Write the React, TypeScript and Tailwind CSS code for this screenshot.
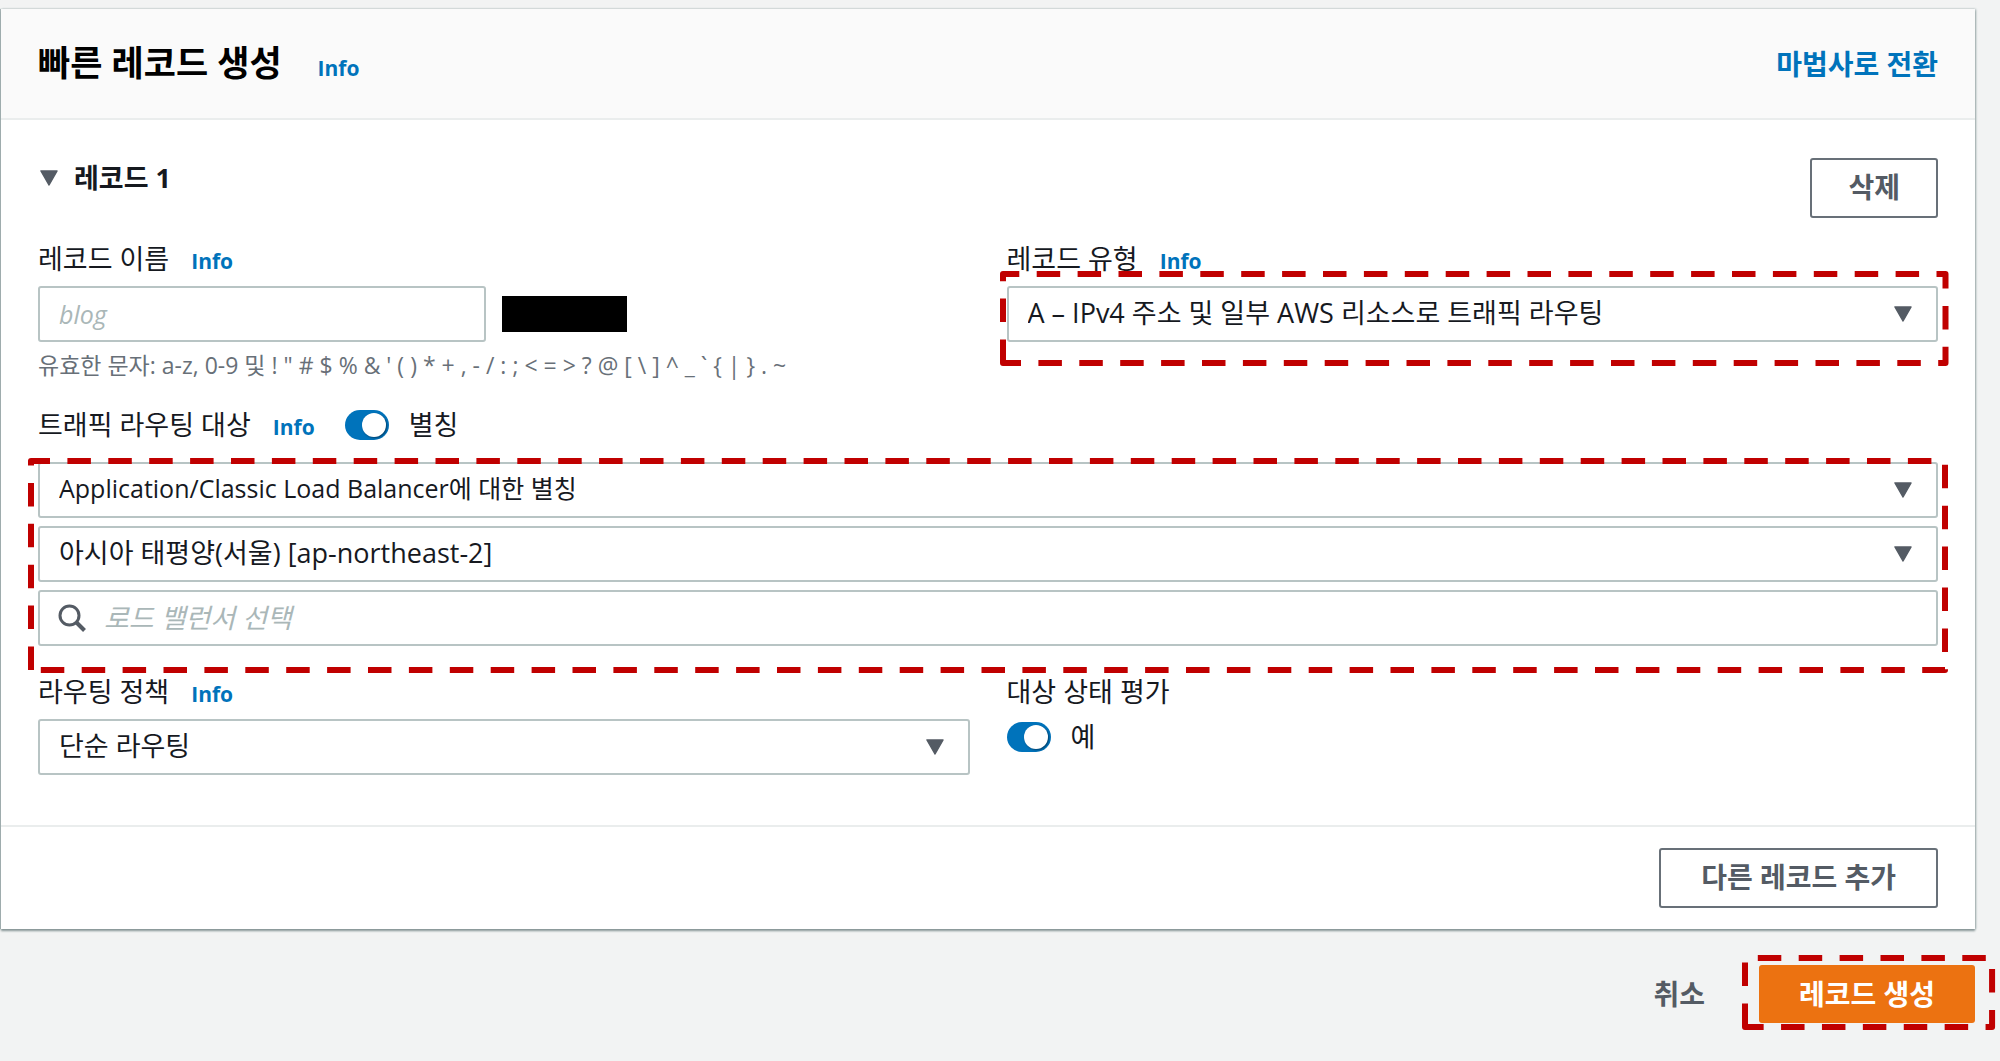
import { useId, useLayoutEffect, useRef, useState, type ReactNode } from 'react'

function Caret({ className = '' }: { className?: string }) {
  return (
    <svg viewBox="0 0 18 16" className={`w-[18px] h-4 shrink-0 ${className}`} aria-hidden="true">
      <path d="M1 1h16L9 15z" fill="#545b64" stroke="#545b64" strokeWidth="1.5" strokeLinejoin="round" />
    </svg>
  )
}

// Dashed red frame around the fields to fill in
function Highlight({ className }: { className: string }) {
  const ref = useRef<SVGSVGElement>(null)
  const [size, setSize] = useState({ w: 0, h: 0 })

  useLayoutEffect(() => {
    const el = ref.current
    if (!el) return
    const measure = () => {
      const box = el.getBoundingClientRect()
      setSize({ w: box.width, h: box.height })
    }
    measure()
    const observer = new ResizeObserver(measure)
    observer.observe(el)
    return () => observer.disconnect()
  }, [])

  return (
    <div className={`absolute pointer-events-none ${className}`}>
      <svg ref={ref} className="block w-full h-full overflow-visible" aria-hidden="true">
        <path
          d={`M0 ${size.h}V0H${size.w}V${size.h}Z`}
          fill="none"
          stroke="#c00000"
          strokeWidth="6"
          strokeDasharray="23.5 17.4"
          strokeLinejoin="round"
        />
      </svg>
    </div>
  )
}

function Info() {
  return (
    <a href="#info" className="text-[21px] font-bold text-[#0073bb]">Info</a>
  )
}

function Field({ id, label, info, children }: { id: string; label: string; info?: boolean; children: ReactNode }) {
  return (
    <div>
      <div className="flex items-baseline gap-[22px] h-9 leading-9 mb-[9px]">
        <label htmlFor={id}>{label}</label>
        {info && <Info />}
      </div>
      {children}
    </div>
  )
}

function Select({ id, value, label, textClass = '' }: { id?: string; value: string; label?: string; textClass?: string }) {
  return (
    <div className="relative">
      <select
        id={id}
        aria-label={label}
        className={`block w-full h-14 appearance-none rounded-[3px] border-2 border-[#b8c4c4] bg-white pl-[19px] pr-16 pb-0.5 text-[#16191f] ${textClass}`}
      >
        <option>{value}</option>
      </select>
      <Caret className="absolute right-[26px] top-5 pointer-events-none" />
    </div>
  )
}

function Toggle({ label, id }: { label: string; id?: string }) {
  const autoId = useId()
  const inputId = id ?? autoId
  return (
    <div className="flex items-center gap-5 h-9">
      <input
        id={inputId}
        type="checkbox"
        role="switch"
        defaultChecked
        className="relative w-11 h-[30px] appearance-none rounded-full bg-[#0073bb] before:absolute before:right-[3px] before:top-[3px] before:size-6 before:rounded-full before:bg-white before:shadow-[1px_1px_2px_#00406b]"
      />
      <label htmlFor={inputId}>{label}</label>
    </div>
  )
}

const buttonClass = 'h-[60px] rounded-[3px] border-2 border-[#687078] bg-white pb-0.5 text-[28px] font-bold text-[#545b64]'

export default function App() {
  return (
    <div className="min-h-screen bg-[#f2f3f3] pt-[9px] pl-px pr-[25px] text-[27px] text-[#16191f] font-['Open_Sans','Noto_Sans_CJK_KR',sans-serif]">
      <section className="bg-white shadow-[0_2px_2px_#879596,1px_0_2px_#aab7b8,-1px_0_1px_#aab7b8]">
        <header className="flex items-center justify-between h-[111px] px-[37px] bg-[#fafafa] border-b-2 border-[#eaeded]">
          <div className="flex items-baseline gap-9">
            <h1 className="text-[35px] font-bold text-black">빠른 레코드 생성</h1>
            <Info />
          </div>
          <a href="#wizard" className="text-[28px] font-bold text-[#0073bb]">마법사로 전환</a>
        </header>

        <div className="px-[37px] pt-[38px] pb-[50px]">
          <div className="flex items-start justify-between mb-[23px]">
            <button className="flex items-center gap-4 h-10 pl-0.5 font-bold">
              <Caret />
              레코드 1
            </button>
            <button className={`${buttonClass} px-9`}>삭제</button>
          </div>

          <div className="grid grid-cols-2 gap-x-[37px]">
            <Field id="name" label="레코드 이름" info>
              <div className="flex items-center gap-4">
                <input
                  id="name"
                  placeholder="blog"
                  className="w-[448px] h-14 rounded-[3px] border-2 border-[#b8c4c4] px-[19px] text-[25px] placeholder:italic placeholder:text-[#aab7b8]"
                />
                <div className="w-[125px] h-9 bg-black" />
              </div>
              <p className="mt-2 text-[23px] leading-[30px] text-[#687078]">
                {'유효한 문자: a-z, 0-9 및 ! " # $ % & \' ( ) * + , - / : ; < = > ? @ [ \\ ] ^ _ ` { | } . ~'}
              </p>
            </Field>
            <Field id="type" label="레코드 유형" info>
              <div className="relative">
                <Select id="type" value="A – IPv4 주소 및 일부 AWS 리소스로 트래픽 라우팅" />
                <Highlight className="-left-1 -right-[7px] -top-3 -bottom-[21px]" />
              </div>
            </Field>
          </div>

          {/* Alias target */}
          <div className="flex items-center gap-[30px] h-9 mt-[27px] mb-[19px]">
            <div className="flex items-baseline gap-[22px]">
              <span>트래픽 라우팅 대상</span>
              <Info />
            </div>
            <Toggle label="별칭" />
          </div>
          <div className="relative flex flex-col gap-2">
            <Select label="엔드포인트" value="Application/Classic Load Balancer에 대한 별칭" textClass="text-[25px]" />
            <Select label="리전" value="아시아 태평양(서울) [ap-northeast-2]" />
            <div className="relative">
              <svg viewBox="0 0 28 28" className="absolute left-5 top-[14px] size-7" fill="none" stroke="#545b64" strokeWidth="3" aria-hidden="true">
                <circle cx="11.5" cy="11.5" r="9.5" />
                <path d="M18.5 18.5l8 8" strokeWidth="4" />
              </svg>
              <input
                aria-label="로드 밸런서 선택"
                placeholder="로드 밸런서 선택"
                className="block w-full h-14 rounded-[3px] border-2 border-[#b8c4c4] pl-16 pr-5 pb-0.5 placeholder:italic placeholder:text-[#aab7b8]"
              />
            </div>
            <Highlight className="-left-[7px] -right-[7px] -top-px -bottom-6" />
          </div>

          <div className="grid grid-cols-2 gap-x-[37px] mt-7">
            <Field id="policy" label="라우팅 정책" info>
              <Select id="policy" value="단순 라우팅" />
            </Field>
            <Field id="health" label="대상 상태 평가">
              <Toggle id="health" label="예" />
            </Field>
          </div>
        </div>

        <footer className="flex justify-end px-[37px] pt-[21px] pb-[21px] border-t-2 border-[#eaeded]">
          <button className={`${buttonClass} px-10`}>다른 레코드 추가</button>
        </footer>
      </section>

      <div className="flex items-center justify-end gap-[54px] mt-9 text-[28px]">
        <button className="font-bold text-[#545b64]">취소</button>
        <div className="relative">
          <button className="block h-[58px] px-10 rounded-[3px] bg-[#ec7211] font-bold text-white">레코드 생성</button>
          <Highlight className="-left-[14px] -right-[17px] -top-[7px] -bottom-1" />
        </div>
      </div>
    </div>
  )
}
